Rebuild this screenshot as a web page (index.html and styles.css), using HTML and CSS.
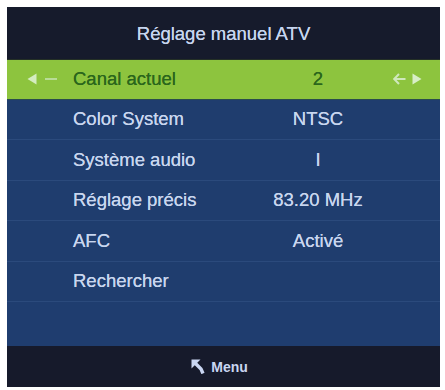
FILE: index.html
```html
<!DOCTYPE html>
<html lang="fr">
<head>
<meta charset="utf-8">
<title>Réglage manuel ATV</title>
<link rel="stylesheet" href="styles.css">
</head>
<body>
<div class="screen">
  <div class="title">Réglage manuel ATV</div>
  <div class="list">
    <div class="row active">
      <div class="lead">
        <svg class="tri" width="10" height="12" viewBox="0 0 10 12"><path d="M9.5 0.5 L0.5 6 L9.5 11.5 Z" fill="#d4ecc0"/></svg>
        <span class="dash"></span>
      </div>
      <div class="label">Canal actuel</div>
      <div class="value">2</div>
      <div class="trail">
        <svg width="13" height="12" viewBox="0 0 13 12"><path d="M6 1 L1.2 6 L6 11" fill="none" stroke="#cfe8bc" stroke-width="2"/><path d="M1.5 6 H12.5" stroke="#cfe8bc" stroke-width="2"/></svg>
        <svg class="tri" width="10" height="12" viewBox="0 0 10 12"><path d="M0.5 0.5 L9.5 6 L0.5 11.5 Z" fill="#d8eec6"/></svg>
      </div>
    </div>
    <div class="row">
      <div class="lead"></div>
      <div class="label">Color System</div>
      <div class="value">NTSC</div>
      <div class="trail"></div>
    </div>
    <div class="row">
      <div class="lead"></div>
      <div class="label">Système audio</div>
      <div class="value">I</div>
      <div class="trail"></div>
    </div>
    <div class="row">
      <div class="lead"></div>
      <div class="label">Réglage précis</div>
      <div class="value">83.20 MHz</div>
      <div class="trail"></div>
    </div>
    <div class="row">
      <div class="lead"></div>
      <div class="label">AFC</div>
      <div class="value">Activé</div>
      <div class="trail"></div>
    </div>
    <div class="row">
      <div class="lead"></div>
      <div class="label">Rechercher</div>
      <div class="value"></div>
      <div class="trail"></div>
    </div>
    <div class="filler"></div>
  </div>
  <div class="footer">
    <svg class="back" width="15" height="15" viewBox="0 0 15 15"><path d="M0.5 0.5 L9.5 0.5 L0.5 9.5 Z" fill="#c9d6f2"/><path d="M3.5 3.5 L10 10 L12 14.5" fill="none" stroke="#c9d6f2" stroke-width="3.4" stroke-linejoin="round"/></svg>
    <span>Menu</span>
  </div>
</div>
</body>
</html>
```

FILE: styles.css
```css
html, body {
  margin: 0;
  background: #ffffff;
}
body {
  padding: 7px 5px 3px 7px;
  font-family: "Liberation Sans", Arial, sans-serif;
}
.screen {
  width: 433px;
  height: 380px;
  display: flex;
  flex-direction: column;
  background: #1f3c6c;
  color: #c8d6ef;
}
.title {
  height: 52px;
  flex: none;
  display: flex;
  align-items: center;
  justify-content: center;
  background: #161b2c;
  font-size: 18.5px;
  color: #c6d5ee;
  padding-top: 1px;
  box-sizing: border-box;
  text-shadow: 0 0 0.6px #c6d5ee;
}
.list {
  flex: 1;
  display: flex;
  flex-direction: column;
}
.row {
  height: 40.5px;
  flex: none;
  display: grid;
  grid-template-columns: 66px 182px 126px 1fr;
  align-items: center;
  border-bottom: 1px solid #2b4a7c;
  box-sizing: border-box;
  font-size: 18.5px;
  background: #1f3d6e;
  text-shadow: 0 0 0.6px currentColor;
}
.row.active {
  background: #8dc43e;
  color: #2b661c;
  border-top: 1px solid #243026;
  border-bottom: 1px solid #2a4d4c;
}
.filler {
  flex: 1;
  background: #1f3d6f;
}
.lead {
  display: flex;
  align-items: center;
  padding-left: 20px;
  gap: 8px;
}
.dash {
  width: 12px;
  height: 2px;
  background: #c4e2ae;
  opacity: 0.8;
}
.tri {
  display: block;
}
.label {
  white-space: nowrap;
}
.value {
  text-align: center;
  white-space: nowrap;
}
.trail {
  display: flex;
  align-items: center;
  gap: 6px;
  padding-left: 12px;
}
.footer {
  height: 41px;
  flex: none;
  display: flex;
  align-items: center;
  justify-content: center;
  gap: 5px;
  background: #161a2b;
  color: #c9d6f2;
  font-size: 14px;
  font-weight: bold;
  padding-right: 8px;
  box-sizing: border-box;
}
.back {
  display: block;
}
```
